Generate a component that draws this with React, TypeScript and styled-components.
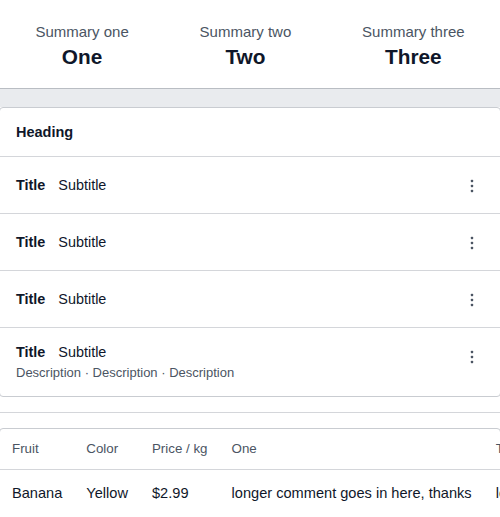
import React from "react";
import styled, { createGlobalStyle } from "styled-components";

const Global = createGlobalStyle`
  html, body { margin: 0; padding: 0; background: #ffffff; }
  body { font-family: "Liberation Sans", Arial, sans-serif; color: #0f172a; }
  * { box-sizing: border-box; }
`;

const Page = styled.div`
  width: 500px;
  overflow: hidden;
`;

const Summary = styled.section`
  display: flex;
  justify-content: space-around;
  align-items: center;
  height: 89px;
  border-bottom: 1px solid #b9bdc3;
  padding-top: 4px;
`;

const Stat = styled.div`
  display: flex;
  flex-direction: column;
  align-items: center;
  gap: 2px;
`;

const StatLabel = styled.span`
  font-size: 15px;
  line-height: 20px;
  color: #4b5563;
`;

const StatValue = styled.span`
  font-size: 20.8px;
  line-height: 26px;
  font-weight: 700;
  color: #0f172a;
`;

const Band = styled.div`
  height: 18px;
  background: #e9ebee;
`;

const Card = styled.div`
  margin: 0 -1px;
  border: 1px solid #c9ccd1;
  border-radius: 4px;
  background: #fff;
  overflow: hidden;
`;

const CardHeading = styled.div`
  padding: 16px;
  font-size: 14.5px;
  line-height: 16px;
  font-weight: 700;
  border-bottom: 1px solid #d4d6da;
`;

const Row = styled.div<{ $last?: boolean }>`
  display: flex;
  align-items: flex-start;
  padding: 16px 16px ${(p) => (p.$last ? "15px" : "16px")};
  border-bottom: ${(p) => (p.$last ? "none" : "1px solid #d4d6da")};
`;

const RowMain = styled.div`
  flex: 1;
  display: flex;
  flex-direction: column;
  gap: 4px;
  min-height: 24px;
  justify-content: center;
`;

const TitleLine = styled.div`
  display: flex;
  gap: 13px;
  font-size: 14.4px;
  line-height: 17px;
`;

const Title = styled.span`
  font-weight: 700;
`;

const Subtitle = styled.span`
  color: #0f172a;
`;

const Description = styled.div`
  font-size: 13px;
  line-height: 16px;
  color: #4b5563;
`;

const MenuButton = styled.button`
  width: 24px;
  height: 24px;
  padding: 0;
  border: none;
  background: none;
  display: flex;
  align-items: center;
  justify-content: center;
  color: #4b5563;
`;

const Divider = styled.hr`
  margin: 15px 0;
  border: none;
  border-top: 1px solid #d4d6da;
`;

const Table = styled.table`
  border-collapse: collapse;
  white-space: nowrap;
`;

const Th = styled.th`
  text-align: left;
  font-weight: 400;
  font-size: 13.33px;
  line-height: 16px;
  color: #4b5563;
  padding: 12px;
  border-bottom: 1px solid #d4d6da;
`;

const Td = styled.td`
  font-size: 14.6px;
  line-height: 22px;
  color: #0f172a;
  padding: 12px 12px 18px;
`;

const Kebab = () => (
  <svg width="24" height="24" viewBox="0 0 24 24" fill="currentColor">
    <rect x="10.8" y="6.8" width="2.4" height="2.4" rx="0.8" />
    <rect x="10.8" y="11.8" width="2.4" height="2.4" rx="0.8" />
    <rect x="10.8" y="16.8" width="2.4" height="2.4" rx="0.8" />
  </svg>
);

const stats = [
  { label: "Summary one", value: "One" },
  { label: "Summary two", value: "Two" },
  { label: "Summary three", value: "Three" },
];

const items = [
  { title: "Title", subtitle: "Subtitle" },
  { title: "Title", subtitle: "Subtitle" },
  { title: "Title", subtitle: "Subtitle" },
  { title: "Title", subtitle: "Subtitle", description: "Description · Description · Description" },
];

export default function App() {
  return (
    <Page>
      <Global />
      <Summary>
        {stats.map((s) => (
          <Stat key={s.label}>
            <StatLabel>{s.label}</StatLabel>
            <StatValue>{s.value}</StatValue>
          </Stat>
        ))}
      </Summary>
      <Band />
      <Card>
        <CardHeading>Heading</CardHeading>
        {items.map((it, i) => (
          <Row key={i} $last={i === items.length - 1}>
            <RowMain>
              <TitleLine>
                <Title>{it.title}</Title>
                <Subtitle>{it.subtitle}</Subtitle>
              </TitleLine>
              {it.description && <Description>{it.description}</Description>}
            </RowMain>
            <MenuButton aria-label="More">
              <Kebab />
            </MenuButton>
          </Row>
        ))}
      </Card>
      <Divider />
      <Card>
        <Table>
          <thead>
            <tr>
              <Th>Fruit</Th>
              <Th>Color</Th>
              <Th>Price / kg</Th>
              <Th>One</Th>
              <Th>Two</Th>
            </tr>
          </thead>
          <tbody>
            <tr>
              <Td>Banana</Td>
              <Td>Yellow</Td>
              <Td>$2.99</Td>
              <Td>longer comment goes in here, thanks</Td>
              <Td>longer comment goes in here, thanks</Td>
            </tr>
          </tbody>
        </Table>
      </Card>
    </Page>
  );
}
